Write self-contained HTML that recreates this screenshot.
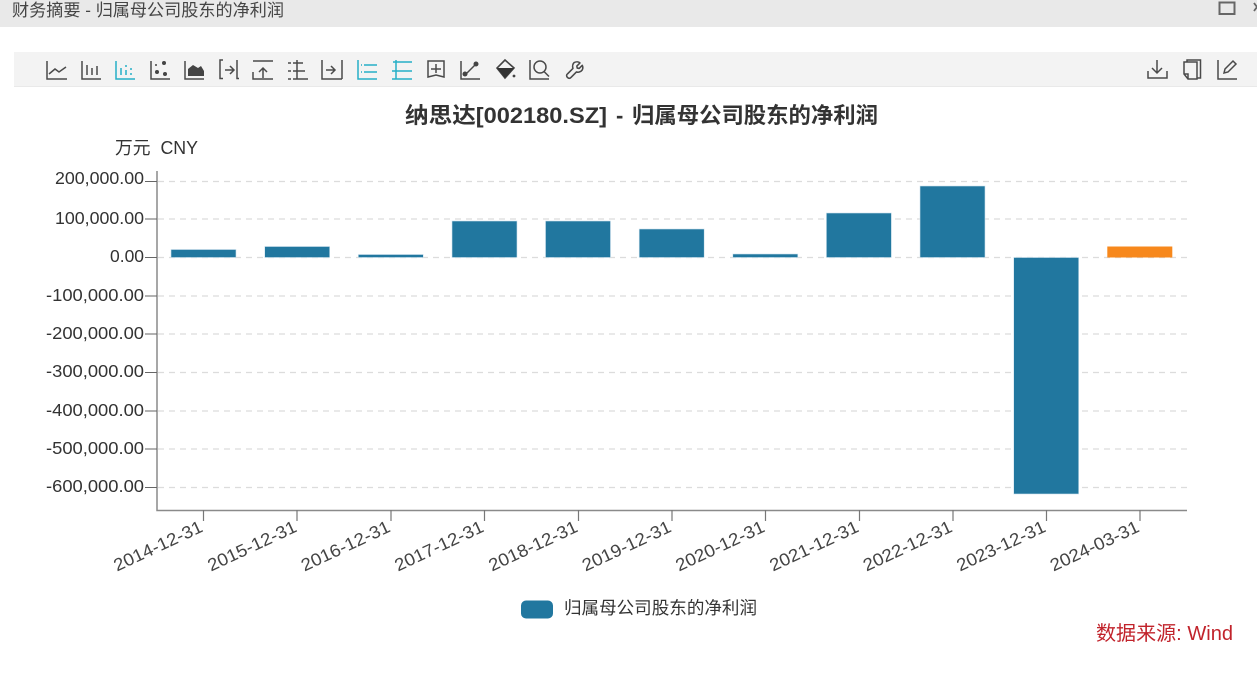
<!DOCTYPE html>
<html><head><meta charset="utf-8"><style>
html,body{margin:0;padding:0;background:#fff;width:1257px;height:674px;overflow:hidden}
svg{display:block}
text{font-family:"Liberation Sans","Noto Sans CJK SC",sans-serif}
.y{font-size:17.5px;fill:#333;text-anchor:end}
.x{font-size:17.5px;fill:#444;text-anchor:end}
.g{stroke:#dcdcdc;stroke-dasharray:6 5;stroke-width:1.2}
.i{fill:none;stroke:#4a4a4a;stroke-width:1.5}
.c{fill:none;stroke:#26b0c8;stroke-width:1.5}
</style></head><body>
<svg width="1257" height="674" viewBox="0 0 1257 674" xmlns="http://www.w3.org/2000/svg">
<rect width="1257" height="674" fill="#fff"/>
<rect width="1257" height="27" fill="#e9e9e9"/>
<text x="12" y="16" font-size="17" fill="#444" textLength="272" lengthAdjust="spacingAndGlyphs">财务摘要 - 归属母公司股东的净利润</text>
<rect x="1219.5" y="2.5" width="15" height="11.5" fill="none" stroke="#666" stroke-width="2"/>
<path d="M1254 3l3 4l-3 4" fill="none" stroke="#666" stroke-width="1.8"/>

<rect x="14" y="52" width="1243" height="34" fill="#f3f3f3"/>
<rect x="14" y="86" width="1243" height="1" fill="#e9e9e9"/>

<!-- toolbar -->
<path class="i" d="M47 61v18h20M49 74l6-5 4 3 7-5"/>
<path class="i" d="M82 61v18h19M87 65v10M92 68v7M97 66v9"/>
<path class="c" d="M116 61v18h19M121 68v7M126 65v2M126 70v5M131 68v2M131 73v2"/>
<path class="i" d="M151 61v18h19"/>
<g fill="#444"><circle cx="164" cy="63" r="2"/><circle cx="157" cy="72" r="2"/><circle cx="165" cy="74" r="2"/><circle cx="156" cy="65" r="1"/></g>
<path class="i" d="M185 61v18h19"/>
<path d="M188 76v-7l5-4 5 3 3-2 3 5v5z" fill="#444"/>
<path class="i" d="M223 60h-3v18.5h3M237 60v18.5h2M225 70h8M230 66l4 4-4 4"/>
<path class="i" d="M253 61h20M253 72v7h20M263 78v-10M259 72l4-4 4 4"/>
<path class="i" d="M288 63h3M288 71h3M288 79h3M297 60v19M293 63h10M293 71h12M293 79h15"/>
<path class="i" d="M322 60v19h20M342 60v19M326 70h9M331 66l4 4-4 4"/>
<path class="c" d="M358 60v19h19M361 65h1M364 65h13M361 72h1M364 72h13"/>
<path class="c" d="M392 71h20M396 60v19M393 62h19M392 79h20"/>
<path class="i" d="M428 61h16v16l-8-2-8 2zM436 64v9M431 69h10"/>
<path class="i" d="M461 61v18h19M466 74l9-9"/>
<circle cx="465" cy="74" r="2.5" fill="#444"/><circle cx="476" cy="64" r="2.5" fill="#444"/>
<path d="M505 60l9 8-9 10-8-10z" fill="none" stroke="#444" stroke-width="1.6"/>
<path d="M497 68h17l-9 10z" fill="#333"/>
<circle cx="514" cy="76" r="1.4" fill="#444"/>
<path class="i" d="M530 60v19h19"/>
<circle cx="540" cy="67" r="6" class="i"/>
<path class="i" d="M544 71.5l5 5"/>
<path fill="none" stroke="#4a4a4a" stroke-width="2" stroke-linejoin="round" transform="translate(574.5,70) scale(.78) translate(-574.5,-70.5)" d="M574 61c3-1.500 6-1 7.500 .5l-4 4 .5 2.500 2.500 .5 4-4c1.500 3 .5 6-1.500 7.500-2 1.500-4.500 1.500-6 1l-7 7c-1 1.500-3 1.500-4.500 0-1.500-1.500-1.500-3.500 0-4.500l7-7c-1-3 0-6 1.500-7.500z"/>

<path class="i" d="M1157 60v12M1152 68l5 5 5-5M1148 71v7h19v-7"/>
<path class="i" d="M1188 74v5h-0M1184 74h4v5M1184 74v-12h13v17h-9zM1187 62v-2h13.500v18h-3.500"/>
<path class="i" d="M1218 60v19h19M1224 73l1-4 8-8 3 3-8 8z"/>

<text x="405" y="123" font-size="22" font-weight="bold" fill="#333" textLength="202" lengthAdjust="spacingAndGlyphs">纳思达[002180.SZ]</text>
<text x="616" y="123" font-size="22" font-weight="bold" fill="#333">-</text>
<text x="632" y="123" font-size="22" font-weight="bold" fill="#333" textLength="246" lengthAdjust="spacingAndGlyphs">归属母公司股东的净利润</text>
<text x="115" y="154" font-size="18" fill="#333" xml:space="preserve" textLength="83" lengthAdjust="spacingAndGlyphs">万元  CNY</text>

<!-- grid -->
<g class="g">
<path d="M158 181.5H1187M158 219H1187M158 257.5H1187M158 296H1187M158 334H1187M158 372.5H1187M158 411H1187M158 449H1187M158 487.5H1187"/>
</g>

<!-- bars -->
<g fill="#21779f" stroke="#cfe3ee" stroke-width=".6">
<rect x="171" y="249.5" width="65" height="8"/>
<rect x="264.7" y="246.5" width="65" height="11"/>
<rect x="358.3" y="254.5" width="65" height="3"/>
<rect x="452" y="221" width="65" height="36.5"/>
<rect x="545.5" y="221" width="65" height="36.5"/>
<rect x="639.2" y="229" width="65" height="28.5"/>
<rect x="732.8" y="254" width="65" height="3.5"/>
<rect x="826.4" y="213" width="65" height="44.5"/>
<rect x="920" y="186" width="65" height="71.5"/>
<rect x="1013.7" y="257.5" width="65" height="236.5"/>
</g>
<rect x="1107.3" y="246.5" width="65" height="11" fill="#f7881c"/>

<!-- axes -->
<path d="M157 171V510.5H1187" fill="none" stroke="#8a8a8a" stroke-width="1.5"/>
<path d="M145 181.5h12M145 219h12M145 257.5h12M145 296h12M145 334h12M145 372.5h12M145 411h12M145 449h12M145 487.5h12" stroke="#666" stroke-width="1"/>
<path d="M203.5 510v11M297 510v11M391 510v11M484.5 510v11M578.5 510v11M672 510v11M765.5 510v11M859.5 510v11M953 510v11M1046.5 510v11M1140 510v11" stroke="#777" stroke-width="1.2"/>

<g class="y">
<text x="144" y="184" textLength="89" lengthAdjust="spacingAndGlyphs">200,000.00</text>
<text x="144" y="224" textLength="89" lengthAdjust="spacingAndGlyphs">100,000.00</text>
<text x="144" y="262" textLength="34" lengthAdjust="spacingAndGlyphs">0.00</text>
<text x="144" y="301" textLength="98" lengthAdjust="spacingAndGlyphs">-100,000.00</text>
<text x="144" y="339" textLength="98" lengthAdjust="spacingAndGlyphs">-200,000.00</text>
<text x="144" y="377" textLength="98" lengthAdjust="spacingAndGlyphs">-300,000.00</text>
<text x="144" y="416" textLength="98" lengthAdjust="spacingAndGlyphs">-400,000.00</text>
<text x="144" y="454" textLength="98" lengthAdjust="spacingAndGlyphs">-500,000.00</text>
<text x="144" y="492" textLength="98" lengthAdjust="spacingAndGlyphs">-600,000.00</text>
</g>

<g class="x">
<text transform="translate(204,531) rotate(-25)" textLength="96" lengthAdjust="spacingAndGlyphs">2014-12-31</text>
<text transform="translate(298,531) rotate(-25)" textLength="96" lengthAdjust="spacingAndGlyphs">2015-12-31</text>
<text transform="translate(391.5,531) rotate(-25)" textLength="96" lengthAdjust="spacingAndGlyphs">2016-12-31</text>
<text transform="translate(485,531) rotate(-25)" textLength="96" lengthAdjust="spacingAndGlyphs">2017-12-31</text>
<text transform="translate(579,531) rotate(-25)" textLength="96" lengthAdjust="spacingAndGlyphs">2018-12-31</text>
<text transform="translate(672.5,531) rotate(-25)" textLength="96" lengthAdjust="spacingAndGlyphs">2019-12-31</text>
<text transform="translate(766,531) rotate(-25)" textLength="96" lengthAdjust="spacingAndGlyphs">2020-12-31</text>
<text transform="translate(860,531) rotate(-25)" textLength="96" lengthAdjust="spacingAndGlyphs">2021-12-31</text>
<text transform="translate(953.5,531) rotate(-25)" textLength="96" lengthAdjust="spacingAndGlyphs">2022-12-31</text>
<text transform="translate(1047,531) rotate(-25)" textLength="96" lengthAdjust="spacingAndGlyphs">2023-12-31</text>
<text transform="translate(1140.5,531) rotate(-25)" textLength="96" lengthAdjust="spacingAndGlyphs">2024-03-31</text>
</g>

<rect x="521" y="600.5" width="32" height="18" rx="5" fill="#21779f"/>
<text x="564" y="614" font-size="17.5" fill="#333" textLength="193" lengthAdjust="spacingAndGlyphs">归属母公司股东的净利润</text>
<text x="1096" y="640" font-size="20" fill="#c1232b" textLength="137" lengthAdjust="spacingAndGlyphs">数据来源: Wind</text>
</svg>
</body></html>
